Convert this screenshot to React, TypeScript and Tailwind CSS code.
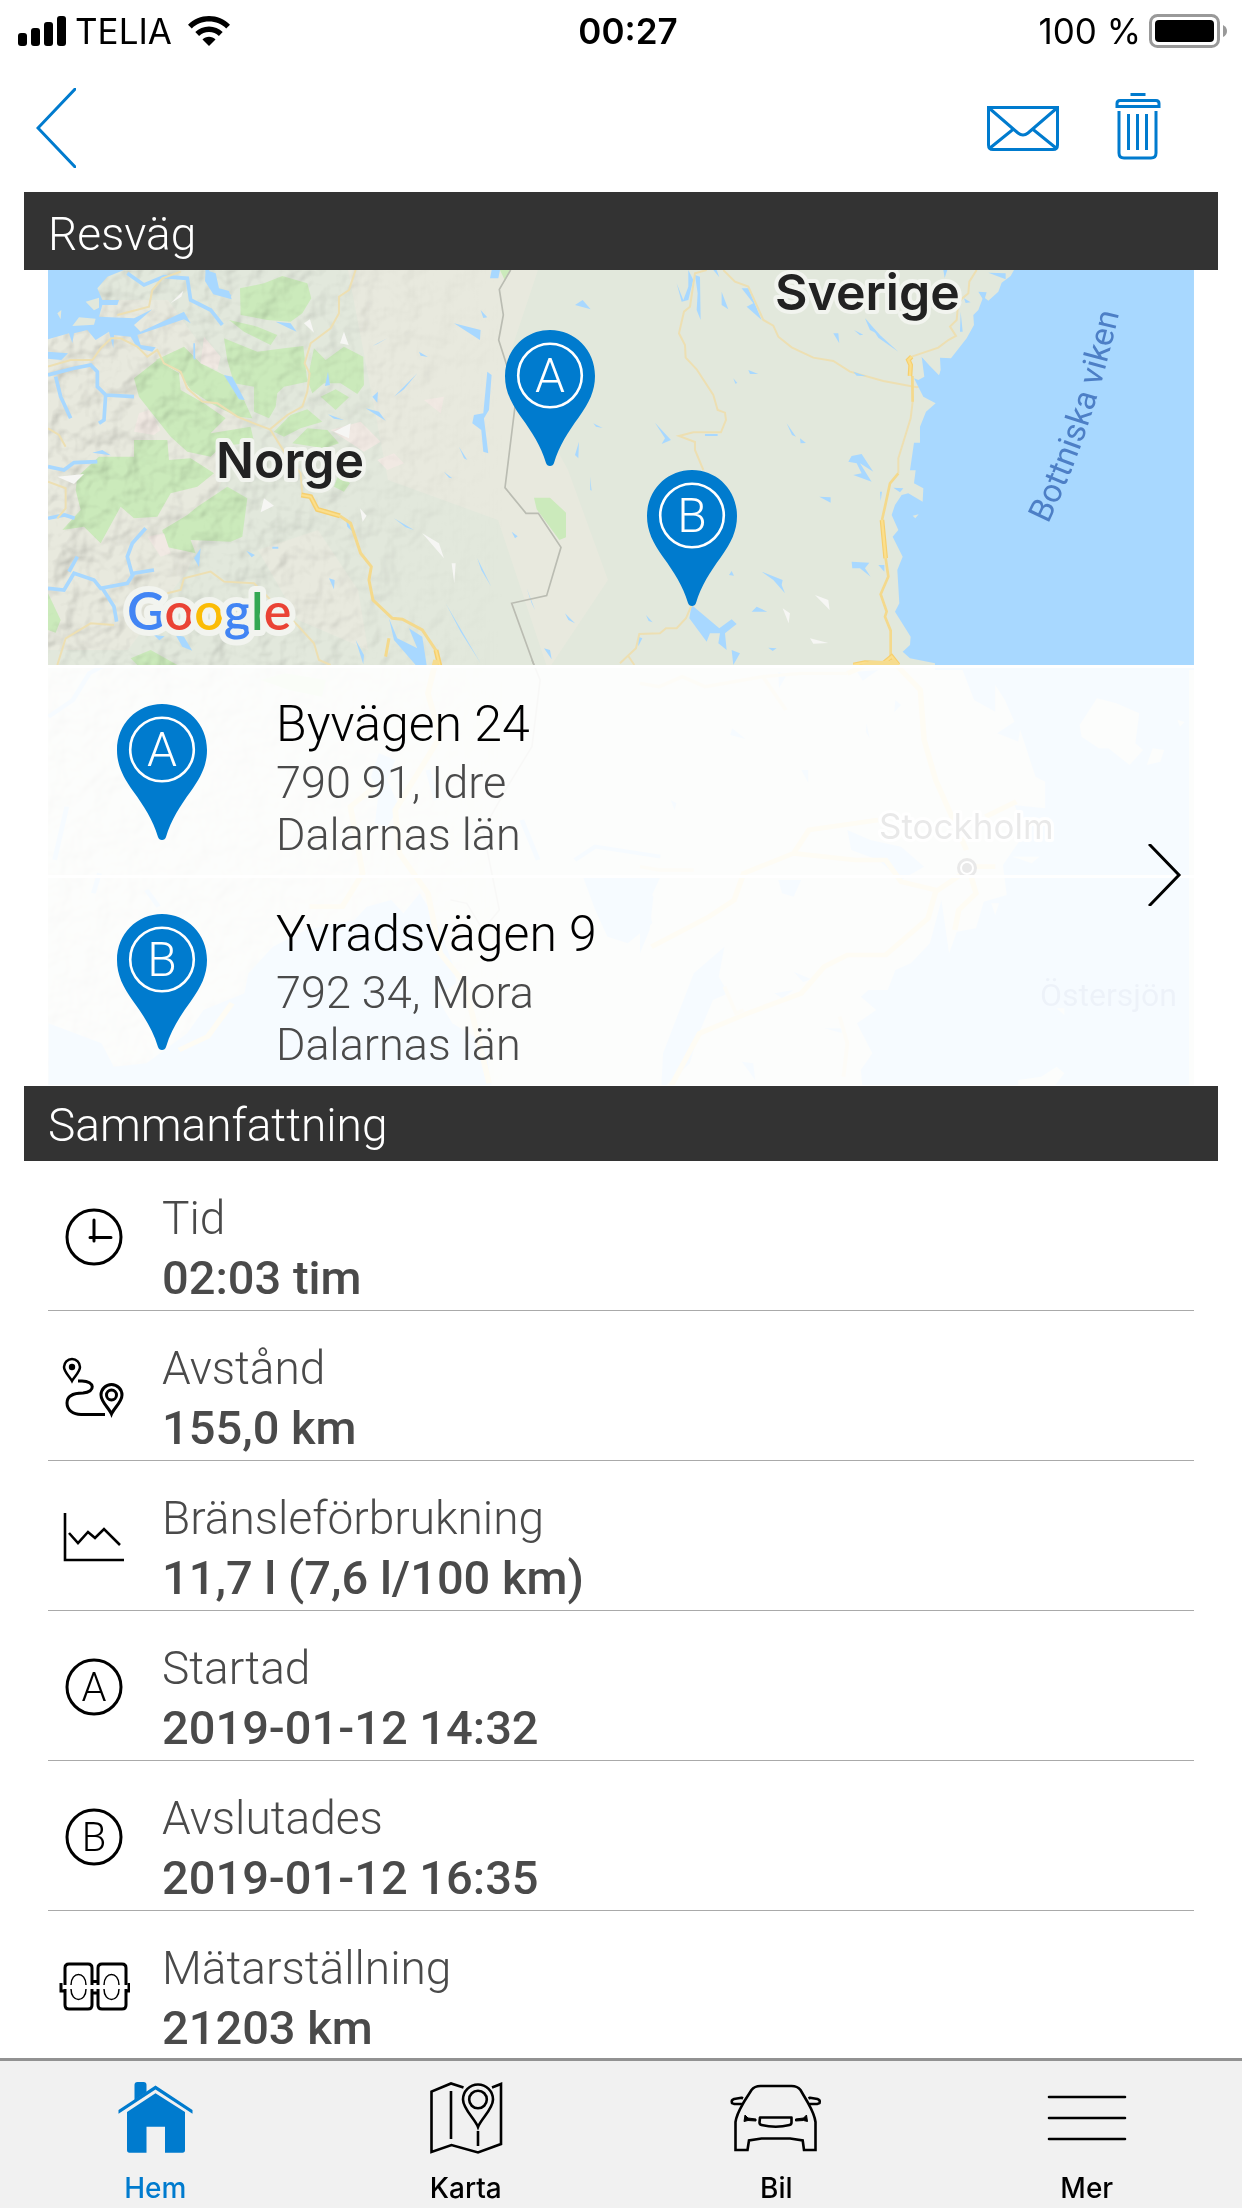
import type { ReactNode } from "react";

interface Stop {
  letter: string;
  street: string;
  city: string;
  region: string;
}

interface SummaryItem {
  label: string;
  value: string;
  icon: ReactNode;
}

interface Tab {
  label: string;
  href: string;
  icon: ReactNode;
}

const stops: Stop[] = [
  { letter: "A", street: "Byvägen 24", city: "790 91, Idre", region: "Dalarnas län" },
  { letter: "B", street: "Yvradsvägen 9", city: "792 34, Mora", region: "Dalarnas län" },
];

function LineIcon({ children }: { children: ReactNode }) {
  return (
    <svg viewBox="0 0 72 72" className="h-18 w-18" fill="none" stroke="currentColor" strokeWidth="3" aria-hidden="true">
      {children}
    </svg>
  );
}

function LetterIcon({ letter }: { letter: string }) {
  return (
    <LineIcon>
      <circle cx="36" cy="36" r="27" />
      <text x="36" y="50" textAnchor="middle" fontSize="40" fill="currentColor" stroke="none" className="font-['Roboto',sans-serif] font-light">
        {letter}
      </text>
    </LineIcon>
  );
}

const summary: SummaryItem[] = [
  {
    label: "Tid",
    value: "02:03 tim",
    icon: (
      <LineIcon>
        <circle cx="36" cy="36" r="27" />
        <path d="M36 19v21M32 36.5h21" strokeLinecap="round" />
      </LineIcon>
    ),
  },
  {
    label: "Avstånd",
    value: "155,0 km",
    icon: (
      <LineIcon>
        <path d="M14 30C12 26 6 21 6 16a8 8 0 0 1 16 0c0 5-6 10-8 14z" strokeWidth="2.5" />
        <circle cx="14" cy="16" r="3.2" fill="currentColor" stroke="none" />
        <path d="M53.500 63C51 57 43 51 43 44a10.5 10.5 0 0 1 21 0c0 7-8 13-10.5 19z" />
        <circle cx="53.5" cy="44" r="5" />
        <path d="M20 30h4C37 30 38 41 25 42 13 42 9 46 9 52c0 7 6 11.5 14 11.5h24" />
      </LineIcon>
    ),
  },
  {
    label: "Bränsleförbrukning",
    value: "11,7 l (7,6 l/100 km)",
    icon: (
      <LineIcon>
        <path d="M7 12v47h59M11 32l9 10 10-11 7 6 9-9 16 16" strokeWidth="2.6" />
      </LineIcon>
    ),
  },
  { label: "Startad", value: "2019-01-12 14:32", icon: <LetterIcon letter="A" /> },
  { label: "Avslutades", value: "2019-01-12 16:35", icon: <LetterIcon letter="B" /> },
  {
    label: "Mätarställning",
    value: "21203 km",
    icon: (
      <LineIcon>
        <path d="M7 34V17q0-4 4-4h19q4 0 4 4v17M7 38v16q0 4 4 4h19q4 0 4-4V38" />
        <path d="M40 34V17q0-4 4-4h20q4 0 4 4v17M40 38v16q0 4 4 4h20q4 0 4-4V38" />
        <path d="M3 32v8h4M71 32v8h-3M34 30.5h6M34 42h6" />
        <path d="M13 34c0-14 15-14 15 0M13 38c0 14 15 14 15 0M46 34c0-14 15-14 15 0M46 38c0 14 15 14 15 0" strokeWidth="1.5" />
      </LineIcon>
    ),
  },
];

const tabs: Tab[] = [
  {
    label: "Hem",
    href: "#hem",
    icon: (
      <svg viewBox="0 0 80 73" className="h-[73px] w-20" fill="currentColor" aria-hidden="true">
        <path d="M19.5 19V4q0-3 3-3h6q3 0 3 3v7z" />
        <path d="M3.500 29l37-24.5 37 24.5v3.800l-37-24.300-37 24.300z" />
        <path d="M12 31l28.500-18.700L70 31v38q0 2.800-2.500 2.800H50v-26H31.500v26H14.500q-2.500 0-2.500-2.800z" />
      </svg>
    ),
  },
  {
    label: "Karta",
    href: "#karta",
    icon: (
      <svg viewBox="0 0 80 73" className="h-[73px] w-20" fill="none" stroke="currentColor" strokeWidth="2.6" aria-hidden="true">
        <path d="M37.500 6.500L25 2.500 5.500 10.500V71l20-7L52 71.500 75 63V3l-9 3.500M25 10v48M52 50v15" />
        <path d="M52 46C49 38 37 28 37 18.500a15 15 0 0 1 30 0C67 28 55 38 52 46z" />
        <circle cx="52" cy="18.5" r="8.8" />
      </svg>
    ),
  },
  {
    label: "Bil",
    href: "#bil",
    icon: (
      <svg viewBox="0 0 96 73" className="h-[73px] w-24" fill="none" stroke="currentColor" strokeWidth="2.6" aria-hidden="true">
        <path d="M7.500 69V41c1-8 5-14 9-21l7-11q3-4 9-4h31q6 0 9 4l7 12c4 7 7 12 8 20v28H76l-1.300-9.500-12.500-2H33.500l-12.500 2L19.500 69z" />
        <path d="M15 17.500l-1.500-.8L6 18q-3 1-2 4l2 .9 9 .1M80.500 17.500l1.500-.8 7.500 1.300q3 1 2 4l-2 .9-9 .1M32 36.500h31.500v5q0 2-2 2.500-13.500 3.500-28 0-2-.5-2-2.500z" strokeLinejoin="round" />
        <path d="M17 34l3 3 8 1v2l-8-.5-4 1zM78.500 34l-3 3-8 1v2l8-.5 4 1z" fill="currentColor" strokeWidth="1" />
      </svg>
    ),
  },
  {
    label: "Mer",
    href: "#mer",
    icon: (
      <svg viewBox="0 0 80 73" className="h-[73px] w-20" fill="none" stroke="currentColor" strokeWidth="2.6" strokeLinecap="round" aria-hidden="true">
        <path d="M2 16h76M2 37h76M2 58h76" />
      </svg>
    ),
  },
];

function Pin({ letter, x, y }: { letter: string; x?: number; y?: number }) {
  return (
    <svg x={x} y={y} width="90" height="136" viewBox="0 0 90 136" className="shrink-0" aria-hidden="true">
      <path
        d="M45 0C70 0 90 20 90 46c0 15-6 27-16 41-11 15-20 29-25 46q-1 3-4 3t-4-3C36 116 27 102 16 87 6 73 0 61 0 46 0 20 20 0 45 0z"
        fill="#007bce"
      />
      <circle cx="45" cy="45.5" r="31.8" fill="none" stroke="#fff" strokeWidth="2.6" />
      <text x="45" y="62" textAnchor="middle" fontSize="48" fill="#fff" className="font-['Roboto',sans-serif] font-light">
        {letter}
      </text>
    </svg>
  );
}

function RouteMap() {
  return (
    <svg viewBox="0 0 1146 816" preserveAspectRatio="xMidYMin slice" className="absolute inset-0 h-full w-full" role="img" aria-label="Karta över resvägen">
      <defs>
        <filter id="relief" x="0" y="0" width="100%" height="100%">
          <feTurbulence type="fractalNoise" baseFrequency="0.035" numOctaves="3" seed="8" />
          <feDiffuseLighting surfaceScale="9" diffuseConstant="1.1" lightingColor="#fff">
            <feDistantLight azimuth="225" elevation="58" />
          </feDiffuseLighting>
        </filter>
        <linearGradient id="reliefFade">
          <stop offset="0" stopColor="#fff" />
          <stop offset="0.2" stopColor="#fff" stopOpacity="0.7" />
          <stop offset="0.4" stopColor="#fff" stopOpacity="0" />
        </linearGradient>
        <mask id="reliefMask">
          <rect width="1146" height="816" fill="url(#reliefFade)" />
        </mask>
        <path id="gulfLabel" d="M1000 254Q1044 165 1073 35" />
      </defs>

      <rect width="1146" height="816" fill="#e2e8dc" />

      {/* highlands */}
      <g fill="#e8e9de">
        <path d="M300 0h190l-30 90 60 110 40 110-60 90-50-150-110-40z" />
        <path d="M210 280l60-20 40 60 10 60-70-30zM0 30h120l80 110-60 160-60 80H0z" />
      </g>

      <g transform="translate(-24 -10) scale(.3333)">
        <g fill="#cbeabb">
          <path d="M648 85l72-15 55-22 75 22 12 45-27 45-35 25-70-5-80-15zM615 180l85 20 60 25-20 30-80-40z" />
          <path d="M600 235l100 40 80-10 58-7 7 62 5 45-70 15-20 20-5 40-20 35-45-20v-75l-60-10-20-70z" />
          <path d="M395 300l85-40 50 50 80 40 50 70 25 55-45-5-80-40-60-40-35-55z" />
          <path d="M330 355l70-55 65 40 5 50 70 40 65 45-45 45 120-20 10 45-100 15-30 30-70-15-50-45-40-50-55-70z" />
          <path d="M870 265l35 35 55-40 58 30 2 85-20 27-50-32h-50l-35 30-15-40zM890 410l45-22 40 24-40 38zM750 515l50-50 50-17 45 37-65 20-50 25zM805 550l45-45 60 5 35 40-45 15z" />
          <path d="M160 650l65-60h105v-50h100l5 60 65-5 70 45-50 40-80 20-40 70-70 5-40-35-60 110-50-50-65 10 55-60-15-60z" />
          <path d="M520 740l90-60 60 35-15 115-35 15-120-5 15 40-90-20-10-50 75-45zM72 1000l38 80-15 38-23-8zM320 1195l60-25 80 45H340zM945 640l33 30-18 25-30-15z" />
        </g>
        <g fill="#f1e9e3">
          <path d="M345 460l30-10 35 60-20 15-60-10zM920 510l90-25 60 60-50 30zM1060 600l50-20 30 30-50 20zM370 830l50-10 20 60-30 10zM1200 420l60-10-10 50zM540 230l50 60-10 40-50-20z" />
        </g>
      </g>

      <g mask="url(#reliefMask)" opacity="0.32" className="mix-blend-multiply">
        <rect width="1146" height="816" filter="url(#relief)" />
      </g>

      {/* north west */}
      <g transform="translate(-24 -10) scale(.3333)">
        <path
          fill="#a8d8ff"
          d="M72 30h228l-50 20-30 35 15 35h50l-5 15h-45l-10 35 105 5 55-27-55 47 20 20 130-60 20 35-20-12-80 27-60 20 10 30 45 7-10 13-45-10-20-35-50-5-2 40-13-50-40 25-25-30-40 10-5 30-10-30-63 18z"
        />
        <path fill="#e2e8dc" d="M185 125l40-12v30l-15 8zM100 160l12-10-2 28zM165 172l50 4-5 18-65 4z" />
        <g fill="none" stroke="#a8d8ff" strokeWidth="11">
          <path d="M310 40l50 35 60-25 70 5 10 65 60 30 35 45M550 30l10 50 60 30M72 345l78-20 50-10 20 20v45l25 25-5 75-15 10M245 405l85 5M95 350l15 60 30 65M72 620l48 10 30-22 70-3" />
          <path d="M72 985l48 5 30-50 60 20 20 25 80-15 20-30 60-10M325 945l-15-55 15-40 40-45M235 985l35 55 8 45M135 935l25-45M72 775l50-10 30 10" />
        </g>
        <path fill="#a8d8ff" d="M72 275l60 5-20 20-40-4zM205 578l30-8 25 16zM545 30l30 10 10 45 30 8 8 25-55-15-25-40z" />
        <g fill="#a8d8ff">
          <path d="M600 345l25 5 37 70-17-2zM755 185l45 5 18 25-23-10zM912 335l6 40-15 3zM1390 335l13 10-8 105-15 25 13 105-15-5-6-65-27-20 5-25 28-5zM1290 190l80 20-2 30zM1045 258l45-23-30 17zM1110 410l70-70-40 48zM1045 410l17-15-2 33zM1025 445l40 10 20 27zM912 463l48 17-30-4zM508 250h5l1 50-6-5z" />
          <path d="M530 865l-5 55-15-25zM667 872l26 13-10 7zM915 955l17 5-2 28zM1095 1075l25 60 60 30-25-60 40 25 13 85h-33l-65-75zM455 1125l25 5 25 42-30-12zM965 775l25 45-20-20zM1305 560l25 40-10-5zM1260 635l25 20-10-2zM1185 275l27 16-22-4zM1370 150l20 22-12 2zM745 860h18v6h-18zM390 1125l32 4-16 12zM1110 775l60 35-25-8zM995 1140l25 45-2 28zM1265 1030l105 180-60-95zM1360 895l42 85-30-50z" />
        </g>
        <g fill="#f6f6f4">
          <path d="M840 190l18-12 12 40zM960 215l14 40-26-5zM930 515l50-25-5 45zM720 715l30 22-40 20zM1195 820l50 30 15 45zM1283 910h12l-4 60zM100 650l80-8-30 30zM1008 745l20 22-12 18zM440 130l38-38-6 18z" />
        </g>
        <g fill="none" stroke="#eddfb2" strokeWidth="6">
          <path d="M995 30l-20 60-30 20v50l-25 45-60 45-18 60 15 30-7 55-15 45-45 25-52 43-48-18-50-20-60-40-45-5-45-40-20-50-50-25-20-40-30 20-30-30-50-25h-28l-32 30-25 35h-65l-68 20M738 508l52 82 40 50 5 60" />
          <path d="M100 1215l25-80 75-45 70 5M430 1000l40-10 10-35 80-20 40 30 90 5 50 50 80 75 50 55 15 50 35 15M72 505l33 20 20 35M280 165l95-25 10-50 30-35 55-20M72 665l53 20v60l-25 30" />
        </g>
        <path fill="none" stroke="#f4d98c" strokeWidth="9" d="M948 768l32 22 30 90 32 40-7 40 12 60 58 55 30 3 60 32 40 60 10 45M1095 1135l-10 55" />
        <path fill="none" stroke="#f6cf6e" strokeWidth="15" d="M832 705l28 5 20 38 68 20M1236 1170l12 50" />
        <path fill="none" stroke="#fbdf8c" strokeWidth="6" d="M832 705l28 5 20 38 68 20M1236 1170l12 50" />
      </g>

      {/* border country */}
      <g transform="translate(432 -10) scale(.3333)">
        <path fill="#cbeabb" d="M162 713h48l48 45v74l-20 8-68-92zM60 30h32L75 62z" />
        <g fill="#a8d8ff">
          <path d="M590 70l20 50 15-40V30l15 30-15 60-20 5zM645 45l15 5 2 130-12-30 3-50zM785 85h20l40 95-45-40 20-10zM725 95l20 53-20-13zM285 135l23-15 24 28zM525 488l48 52-28 12 10-17zM1105 605l10-17 30-6 35 53-40-25 35 55-55-20 25-5-15-30zM1115 905l53 3-13 17 17 25-32-25h-23zM845 935l63 25-3 15 10 25-35-40z" />
          <path d="M635 1035l83 70 37-27 15 14-35 28 5 50-25-20 5-30h-30l-10 25-52-70zM815 1055l15-15 32 15zM755 1170l25 10-20 35zM192 1165l18 5 5 28zM255 1060l30 30-20-10zM285 585l12-40-2 50zM140 985l25 65-10-20zM805 330l30 12h-25zM1018 710l34 2v16zM1060 220h15l3 30zM1155 175l45 50-30-15zM35 30h25l-5 25H30zM675 522h38v6h-38zM920 490l28 40-12-5zM960 535l18 14-16 1zM747 945l8-12 7 14zM865 1163l25 2-12 8zM340 490l28 14-20-4zM330 650l5 42-4-2zM535 625l12 28zM475 1130l12 5-12 24zM498 1065l20 22-12-4zM95 815l18 14-8 6zM760 355l12 14-6 2zM768 405l12 15zM700 30h10l8 22zM80 65l40 34z" />
        </g>
        <g fill="#f6f6f4">
          <path d="M1005 1005l40 15 4 30zM908 1045l22 15-4 30zM990 1135l55 14-45 2z" />
        </g>
        <path fill="none" stroke="#babcb2" strokeWidth="5" d="M92 30L58 88l12 77-14 75 24 75 25 125-30 243 63 77h37l68 102-43 145-105 23 67 185" />
        <path
          fill="none"
          stroke="#eddfb2"
          strokeWidth="6"
          d="M680 30l-35 10-15 100-18 15-15 65 18 35 2 38 33 35 50 77 13 45 22 8 3 22-15 37h-83l-43 11 48 18v24l25 60M635 1035l-17 40-28 30h-32l-18 15-62 2-10 43-48 45M445 1188l18 27M730 30l35 35 40 15 45 100 30 17 15 33 40 32 65 31 60 10 50 32 100 28 100 19 55-20 25 5"
        />
      </g>

      {/* gulf coast */}
      <g transform="translate(792 -10) scale(.3333)">
        <path
          fill="#a8d8ff"
          d="M522 30l-10 18-27 20-10 27-30 27-15-12-15 40-15 15 2 30-22 40-20 25-27 35-33-2 2 37-5 15-52-55 8 60-18 10-13-5 28 55 37 20-29 25-18 45v48h-18l-12 83h17l-5 39 28 15-2 40-43-25-20 5-20 30-10 30 20 45-17 20 30 60-16 40 6 100-13 25 47 75-2 25-22 20 22 20 75 15v20h777V30z"
        />
        <g fill="#a8d8ff">
          <path d="M75 172l25 35 75 68-60-42zM362 155l6 60h-8zM415 95l25 2-8 26zM310 30h12l-8 24zM160 683l30 2-10 12zM115 915h18v20zM445 38l52 2v18zM120 695h6l-4 28zM42 210l28 14-10 2zM372 115l20 12-15 2zM40 335l40 14-30-2z" />
        </g>
        <path fill="#e2e8dc" d="M218 767l18-4-10 12zM245 290l35-2 20 45-3 12-30-30z" />
        <path fill="none" stroke="#eddfb2" strokeWidth="6" d="M410 30l-22 35-3 35-30 25-5 55-20 20 18 28-23 12-30 23-80 27M217 348l1 77-6 50-37 120v45" />
        <path fill="none" stroke="#f4d98c" strokeWidth="8" d="M217 348l1 77M175 640l-25 30-15 70-9 40M137 895l8 55-23 53 18 52-5 15 17 42v78" />
        <path fill="none" stroke="#f6cf6e" strokeWidth="14" d="M215 290l-10 10 7 15-2 33M126 780l11 115M40 1215l35-7 55 2 25-20 20 25" />
        <path fill="none" stroke="#fbdf8c" strokeWidth="7" d="M215 290l-10 10 7 15-2 33M126 780l11 115M40 1215l35-7 55 2 25-20 20 25" />
      </g>

      {/* Vänern and the lakes below */}
      <g transform="translate(-24 390) scale(.408 .3333)">
        <path
          fill="#a8d8ff"
          d="M60 1090l130 60 30 70 80-10 100-90 40-70 100-50 10-60 60-80 80-50 120-30 30-40 60-20 30 40 40-60 30 60 20 50 30 100 10 60-50 40 40 80 80 60 20 160H60zM1370 650h190l-30 80 10 60-60 60-50-20-30-80zM870 280l40 20-20 60 30 80-30 60-30-10 10-100-20-40z"
        />
        <path fill="#cbeabb" d="M580 60l60-20 100 20-10 50-80-20z" />
        <g fill="none" stroke="#a8d8ff" strokeWidth="12">
          <path d="M60 170l60-50 40-80 30-20M75 600l30-160M170 700l15-60M300 690l30 50M1350 600l50-40 160 30M1220 480l40 120M990 330l20 90" />
        </g>
        <path fill="none" stroke="#f6dc8e" strokeWidth="14" d="M1010 0l-20 100 30 130-110 220 10 130 70 120 30 180 60 90 60 300M700 740l80 0 50-100-30-200 60-60M380 1170l70-40 60-100" />
        <path fill="none" stroke="#babcb2" strokeWidth="4" d="M1245 0l20 60-20 200-60 120-60 130 40 240-40 60-40-80-40-10" />
      </g>

      {/* Stockholm archipelago */}
      <g transform="translate(592 390) scale(.384 .3333)">
        <path
          fill="#a8d8ff"
          d="M755 15h80l35 105 55 35V75l25 45 25 65-45 35 55 25 5-35 40 140 25 15v80l-80-10 30 80-60 100 10 90-60 20-20 80-50 10-20 65-20-160-30 130-50 60-40 20-20 60h-50l-20 20 40 40-50 40 40 90-30 50 10 125h845V15z"
        />
        <path fill="#a8d8ff" d="M220 860l-15 90 25 50-40 20-40 110-20 80-75 80 5-110 40-120 40-120zM540 510l60 30 80 20 60 60-60 40-60-60-70-30zM360 660h60l-20 50-30-10zM0 650l35 60-10 100-25 70z" />
        <path fill="#a8d8ff" d="M360 35l22 10-20 40zM240 205l35 32-40-12zM590 190l8 45-10-20zM665 120l15 15-18 22zM420 330h18v38zM80 420l15 10-5 20zM615 745l40 30zM540 820l30 40zM400 935l45 22-20 10zM350 1000l50-10-30 25zM480 1105h45v14zM265 1205l30 5 5 50zM565 35l55-5-40 32z" />
        <path fill="#e2e8dc" d="M1190 115l50 15 60 30-10 90 20 20-35 45-55-50h-25l-45-35-5-35zM1335 265l30 5-10 35-35 10zM1400 180l18 6-12 14zM970 590l70 0-20 20zM1085 1045h20v20zM985 1260l60-10 40-30 20 20-30 45h-90zM915 730l20 0-10 35z" />
        <path
          fill="none"
          stroke="#f6dc8e"
          strokeWidth="14"
          d="M655 0l75 90 10 150 30 120 50 130 30 80M30 860l150-90 65-50 25-80 130-60 40-70 180-30M80 1280l75-160 125-60 140-60 60-80 60-35h100l110-110 20-80 90-70M400 580l160 20h80l40 65 90 25M855 620h70M860 640l15 60-45 50-10 60M900 470l80-45M540 40l60-30h60"
        />
        <path fill="none" stroke="#eddfb2" strokeWidth="10" d="M0 70l50 10 60-30 60 30 150-30 30 50 30 50M320 50l100-10 120 0M0 620l50 10h90M220 980l30 80 20-10M520 1070l20 80-10 100" />
      </g>

      <g className="font-['Inter',sans-serif]" strokeLinejoin="round">
        <g fontSize="50" fontWeight="600" fill="#222" stroke="#f2f4ef" strokeWidth="8" style={{ paintOrder: "stroke" }}>
          <text x="168" y="208">Norge</text>
          <text x="727" y="40">Sverige</text>
        </g>
        <text x="831" y="569" fontSize="35" fill="#222" stroke="#fff" strokeWidth="6" style={{ paintOrder: "stroke" }}>
          Stockholm
        </text>
      </g>
      <circle cx="919" cy="598" r="8.5" fill="#fff" stroke="#222" strokeWidth="3" />
      <circle cx="919" cy="598" r="5" fill="#222" />
      <g className="font-['Roboto',sans-serif]" fill="#4d7fc6">
        <text fontSize="33">
          <textPath href="#gulfLabel">Bottniska viken</textPath>
        </text>
        <text x="992" y="736" fontSize="32">Östersjön</text>
      </g>

      <text x="79" y="360" fontSize="52" fontWeight="600" className="font-['Lato',sans-serif]" stroke="#f2f4ef" strokeWidth="12" strokeLinejoin="round" style={{ paintOrder: "stroke" }}>
        <tspan fill="#4285f4">G</tspan>
        <tspan fill="#ea4335">o</tspan>
        <tspan fill="#fbbc05">o</tspan>
        <tspan fill="#4285f4">g</tspan>
        <tspan fill="#34a853">l</tspan>
        <tspan fill="#ea4335">e</tspan>
      </text>

      <Pin letter="A" x={457} y={60} />
      <Pin letter="B" x={599} y={200} />
    </svg>
  );
}

function StatusBar() {
  return (
    <div className="grid h-[62px] grid-cols-[1fr_auto_1fr] items-center pr-1 pl-[18px] font-['Inter',sans-serif] text-[35px] leading-none">
      <div className="flex items-center">
        <svg viewBox="0 0 48 30" className="h-[30px] w-12" aria-hidden="true">
          <rect x="0" y="17" width="9" height="13" rx="3" />
          <rect x="13" y="12" width="9" height="18" rx="3" />
          <rect x="26" y="6" width="9" height="24" rx="3" />
          <rect x="39" y="0" width="9" height="30" rx="3" />
        </svg>
        <span className="ml-[9px]">TELIA</span>
        <svg viewBox="0 0 42 30" className="ml-4 h-[30px] w-[42px]" aria-hidden="true">
          <path d="M21 0C13 0 5.500 3.300 0 8.700l3.800 3.800C8.300 8.200 14.300 5.600 21 5.600s12.700 2.600 17.200 6.900L42 8.700C36.500 3.300 29 0 21 0z" />
          <path d="M21 10.500c-5.300 0-10.200 2.100-13.700 5.600l3.800 3.800c2.600-2.500 6-4 9.900-4s7.300 1.500 9.900 4l3.800-3.800c-3.500-3.500-8.400-5.600-13.700-5.600z" />
          <path d="M21 20.800c-2.500 0-4.800 1-6.500 2.600L21 30l6.500-6.600c-1.700-1.600-4-2.600-6.500-2.600z" />
        </svg>
      </div>
      <span className="font-semibold">00:27</span>
      <div className="mr-2.5 flex items-center justify-end gap-2">
        <span>100 %</span>
        <svg viewBox="0 0 79 34" className="h-[34px] w-[79px]" aria-hidden="true">
          <rect x="1.5" y="1.5" width="68" height="31" rx="7" fill="none" stroke="#999" strokeWidth="3" />
          <rect x="6" y="6" width="59" height="22" rx="4" />
          <path d="M74 11q4 2 4 6t-4 6z" fill="#999" />
        </svg>
      </div>
    </div>
  );
}

function Toolbar() {
  return (
    <header className="flex h-[130px] items-center justify-between pt-0.5 pr-[81px] pl-9 text-[#007bce]">
      <button type="button" aria-label="Tillbaka">
        <svg viewBox="0 0 40 80" className="h-20 w-10" fill="none" stroke="currentColor" strokeWidth="3">
          <path d="M41 -1L2 40l39 41" />
        </svg>
      </button>
      <div className="flex items-center gap-14">
        <button type="button" aria-label="Skicka">
          <svg viewBox="0 0 72 45" className="h-[45px] w-[72px]" fill="none" stroke="currentColor" strokeWidth="3">
            <path d="M1.500 1.500h69V39q0 4.500-4.500 4.500H6q-4.500 0-4.500-4.500zM2 2l29 25q5 4 10 0L70 2M26.500 23L3 42M45.500 23L69 42" />
          </svg>
        </button>
        <button type="button" aria-label="Ta bort">
          <svg viewBox="0 0 46 70" className="h-[70px] w-[46px]" fill="none" stroke="currentColor" strokeWidth="3">
            <path d="M15.500 1.500h15M2 13.500v-3q0-3 3-3h36q3 0 3 3v3zM4 18v42q0 5 5 5h27q5 0 5-5V18M13.500 21v36M22.500 21v36M31.500 21v36" />
          </svg>
        </button>
      </div>
    </header>
  );
}

export default function App() {
  return (
    <div className="flex min-h-screen flex-col bg-white font-['Roboto',sans-serif] text-black">
      <StatusBar />
      <Toolbar />

      <main className="flex-1 px-6">
        <h2 className="flex h-[78px] items-center bg-[#333] px-6 pt-1.5 text-[46px] font-light text-white">Resväg</h2>
        <section className="relative mx-6 overflow-hidden">
          <RouteMap />
          <div className="h-[395px]" />
          <a href="#resvag" className="relative block border-b border-white">
            {stops.map((stop) => (
              <div key={stop.letter} className="flex h-[210px] border-t-3 border-white bg-white/90 bg-clip-padding pl-[69px] font-light">
                <div className="pt-9">
                  <Pin letter={stop.letter} />
                </div>
                <div className="pt-6 pl-[69px] text-[45px] leading-[52px] text-[#4a4a4a]">
                  <h3 className="text-[50px] leading-[65px] text-black">{stop.street}</h3>
                  <p>{stop.city}</p>
                  <p>{stop.region}</p>
                </div>
              </div>
            ))}
            <svg viewBox="0 0 34 62" className="absolute inset-y-0 right-3 my-auto h-[62px] w-[34px]" fill="none" stroke="#000" strokeWidth="3" aria-hidden="true">
              <path d="M1 0l30 31L1 62" />
            </svg>
          </a>
        </section>

        <h2 className="flex h-[75px] items-center bg-[#333] px-6 pt-1 text-[46px] font-light text-white">Sammanfattning</h2>
        <dl className="mx-6">
          {summary.map((item) => (
            <div key={item.label} className="flex h-[150px] border-b border-[#aaa] text-[#4a4a4a] last:h-[146px] last:border-b-0">
              <div className="flex w-[92px] justify-center pt-10 text-black">{item.icon}</div>
              <div className="pt-[27px] pl-[22px] leading-[60px]">
                <dt className="text-[46px] font-light">{item.label}</dt>
                <dd className="text-[47px] font-medium">{item.value}</dd>
              </div>
            </div>
          ))}
        </dl>
      </main>

      <nav className="sticky bottom-0 grid h-[150px] grid-cols-4 border-t-3 border-[#929292] bg-[#f1f1f1] pt-5 font-['Inter',sans-serif]">
        {tabs.map((tab) => (
          <a
            key={tab.label}
            href={tab.href}
            className={tab.label === "Hem" ? "flex flex-col items-center text-[#007bce]" : "flex flex-col items-center"}
          >
            {tab.icon}
            <span className="mt-3 text-[28px] leading-[44px] font-medium">{tab.label}</span>
          </a>
        ))}
      </nav>
    </div>
  );
}
